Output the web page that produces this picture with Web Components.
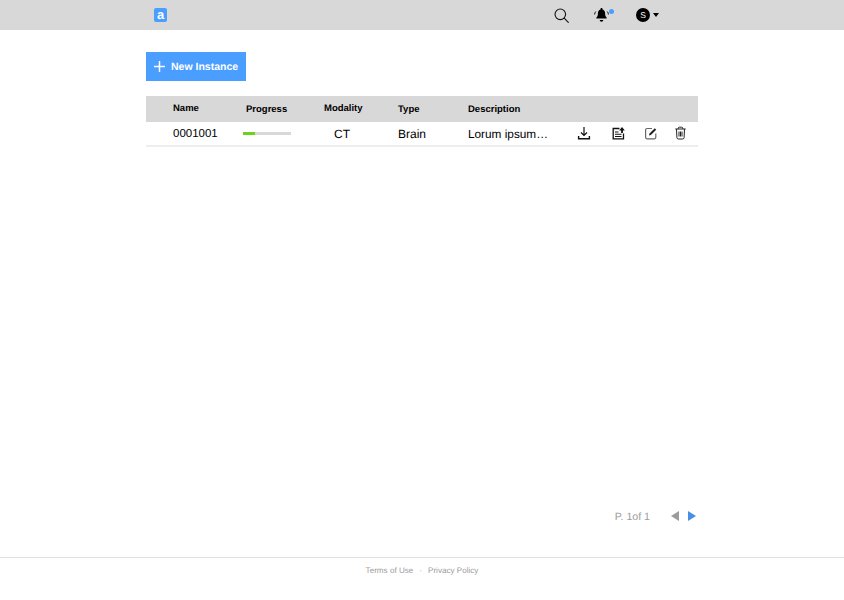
<!DOCTYPE html>
<html>
<head>
<meta charset="utf-8">
<style>
  html, body { margin: 0; padding: 0; background: #fff; }
  body { font-family: "Liberation Sans", Arial, sans-serif; text-rendering: geometricPrecision; }
</style>
</head>
<body>
<app-page>
  <top-bar slot="top"></top-bar>
  <new-button slot="main">New Instance</new-button>
  <instance-table slot="main"></instance-table>
  <page-nav slot="pager"></page-nav>
  <site-footer slot="bottom"></site-footer>
</app-page>
<script>
  class AppPage extends HTMLElement {
    constructor() {
      super();
      this.attachShadow({ mode: 'open' });
      this.shadowRoot.innerHTML = `
        <style>
          :host { display: flex; flex-direction: column; height: 600px; overflow: hidden; }
          main { flex: 1; padding: 22px 146px 0 146px; display: flex; flex-direction: column; }
          .pager { padding: 0 148px 0 0; height: 49px; }
        </style>
        <slot name="top"></slot>
        <main><slot name="main"></slot></main>
        <div class="pager"><slot name="pager"></slot></div>
        <slot name="bottom"></slot>
      `;
    }
  }

  class TopBar extends HTMLElement {
    constructor() {
      super();
      this.attachShadow({ mode: 'open' });
      this.shadowRoot.innerHTML = `
        <style>
          :host { display: flex; align-items: center; height: 30px; background: #d8d8d8; padding-left: 154px; }
          .logo { width: 13px; height: 14px; border-radius: 2px; background: #4a9eff; color: #fff; font: bold 13px/14px "Liberation Sans", sans-serif; text-align: center; }
          .search { margin-left: 387px; display: block; }
          .bell-wrap { position: relative; margin-left: 25px; width: 15px; height: 14px; }
          .bell-wrap svg { display: block; }
          .dot { position: absolute; top: 1px; left: 14.500px; width: 5px; height: 5px; border-radius: 50%; background: #4a9eff; }
          .avatar { margin-left: 28px; width: 14px; height: 14px; border-radius: 50%; background: #000; color: #fff; font: 8.500px/14px "Liberation Sans", sans-serif; text-align: center; position: relative; left: -1px; }
          .caret { margin-left: 2px; width: 0; height: 0; border-left: 3px solid transparent; border-right: 3px solid transparent; border-top: 4px solid #000; }
        </style>
        <div class="logo">a</div>
        <svg class="search" width="15" height="15" viewBox="0 0 15 15" fill="none" stroke="#111" stroke-width="1.100"><circle cx="6.300" cy="6.300" r="5.300"/><path d="M10.200 10.200 14.300 14.300" stroke-linecap="round"/></svg>
        <div class="bell-wrap">
          <svg width="15" height="14" viewBox="0 0 15 14"><path fill="#000" d="M7.500 0c.6 0 1 .4 1 1v.5c1.800.5 2.600 2 2.600 3.900 0 2 .5 3.200 1.500 4.100v1H2.400v-1c1-.9 1.500-2.100 1.500-4.100 0-1.900.8-3.400 2.600-3.900V1c0-.6.400-1 1-1z"/><path fill="#000" d="M5.700 12h3.600a1.800 1.700 0 0 1-3.600 0z"/><path fill="none" stroke="#000" stroke-width=".9" d="M1.800 3.500C1 4.300.7 5.200.6 6.500M13.200 3.500c.8.800 1.100 1.700 1.200 3"/></svg>
          <span class="dot"></span>
        </div>
        <div class="avatar">S</div>
        <div class="caret"></div>
      `;
    }
  }

  class NewButton extends HTMLElement {
    constructor() {
      super();
      this.attachShadow({ mode: 'open' });
      this.shadowRoot.innerHTML = `
        <style>
          :host { display: flex; align-items: center; align-self: flex-start; width: 100px; height: 29px; background: #4a9eff; color: #fff; font: bold 10.500px "Liberation Sans", sans-serif; box-sizing: border-box; padding-left: 8px; }
          svg { margin-right: 6px; display: block; }
        </style>
        <svg width="11" height="11" viewBox="0 0 11 11" stroke="#fff" stroke-width="1.500"><path d="M5.500 0v11M0 5.500h11"/></svg>
        <slot></slot>
      `;
    }
  }

  class InstanceTable extends HTMLElement {
    constructor() {
      super();
      this.attachShadow({ mode: 'open' });
      this.shadowRoot.innerHTML = `
        <style>
          :host { display: block; margin-top: 15px; width: 552px; }
          .head, .row { display: grid; grid-template-columns: 27px 70px 81px 74px 70px 1fr; align-items: center; }
          .head { height: 26px; background: #d8d8d8; font: bold 9.500px "Liberation Sans", sans-serif; color: #000; }
          .head .up { position: relative; top: -1px; }
          .head .prog { padding-left: 3px; }
          .row { height: 23px; border-bottom: 2px solid #eee; font: 12px "Liberation Sans", sans-serif; color: #000; }
          .id { font-size: 11.500px; }
          .ct { padding-left: 10px; }
          .track { width: 48px; height: 3px; background: #d8d8d8; }
          .fill { width: 12px; height: 3px; background: #6fd21a; }
          .last { display: flex; align-items: center; }
          .desc { width: 109px; font-size: 11.800px; }
          .actions { display: flex; align-items: center; position: relative; top: -1px; }
          .actions svg { display: block; }
          .a1 { margin-right: 20px; }
          .a2 { margin-right: 19px; }
          .a3 { margin-right: 16px; }
        </style>
        <div class="head">
          <span></span><span class="up">Name</span><span class="prog">Progress</span><span class="up">Modality</span><span>Type</span><span>Description</span>
        </div>
        <div class="row">
          <span></span><span class="id">0001001</span>
          <div class="track"><div class="fill"></div></div>
          <span class="ct">CT</span><span>Brain</span>
          <div class="last">
            <span class="desc">Lorum ipsum…</span>
            <div class="actions">
              <svg class="a1" width="14" height="14" viewBox="0 0 14 14" fill="none" stroke="#111" stroke-width="1.200"><path d="M7 1v8.500M4 6.500l3 3 3-3"/><path d="M1.600 10v2.700h10.800V10" stroke-width="1.400"/></svg>
              <svg class="a2" width="14" height="14" viewBox="0 0 14 14" fill="none" stroke="#111" stroke-width="1.300"><path d="M8.500 2.500H2.200v10.300h10.300V7.500"/><path d="M4 6h3.500M4 8.300h6.500M4 10.500h6.500" stroke-width="1.100"/><path d="M11 7V3.500" stroke-width="1.800"/><path d="M8.200 4.500 11 1l2.800 3.500z" fill="#111" stroke="none"/></svg>
              <svg class="a3" width="14" height="14" viewBox="0 0 14 14" fill="none" stroke="#666" stroke-width="1.200"><path d="M11.800 7.500v3.800a1.500 1.500 0 0 1-1.500 1.500H3.100a1.500 1.500 0 0 1-1.500-1.500V4A1.500 1.500 0 0 1 3.100 2.500H8"/><path d="M5 9.500 5.500 7.600 10.800 2.300l1.400 1.400L6.900 9z" fill="#222" stroke="none"/></svg>
              <svg width="14" height="14" viewBox="0 0 14 14" fill="none" stroke="#222" stroke-width="1"><path d="M1.300 3h10.400M4.300 3V2.200a1 1 0 0 1 1-1h2.400a1 1 0 0 1 1 1V3M2.500 3l.4 8.500a1.500 1.500 0 0 0 1.500 1.500h4.200a1.500 1.500 0 0 0 1.500-1.500L10.500 3M5 5.500v5M6.500 5.500v5M8 5.500v5"/></svg>
            </div>
          </div>
        </div>
      `;
    }
  }

  class PageNav extends HTMLElement {
    constructor() {
      super();
      this.attachShadow({ mode: 'open' });
      this.shadowRoot.innerHTML = `
        <style>
          :host { display: flex; align-items: center; justify-content: flex-end; height: 16px; font: 10.600px "Liberation Sans", sans-serif; color: #9b9b9b; }
          .label { margin-right: 21px; position: relative; top: 1px; }
          .prev { width: 0; height: 0; border-top: 5px solid transparent; border-bottom: 5px solid transparent; border-right: 8px solid #9b9b9b; margin-right: 9px; }
          .next { width: 0; height: 0; border-top: 5px solid transparent; border-bottom: 5px solid transparent; border-left: 8px solid #4a90e2; }
        </style>
        <span class="label">P. 1of 1</span>
        <span class="prev"></span>
        <span class="next"></span>
      `;
    }
  }

  class SiteFooter extends HTMLElement {
    constructor() {
      super();
      this.attachShadow({ mode: 'open' });
      this.shadowRoot.innerHTML = `
        <style>
          :host { display: flex; justify-content: center; align-items: flex-start; gap: 6px; height: 43px; box-sizing: border-box; border-top: 1px solid #e2e2e2; padding: 7px 0 0; font: 8.100px/12px "Liberation Sans", sans-serif; color: #9b9b9b; }
        </style>
        <span>Terms of Use</span><span>·</span><span>Privacy Policy</span>
      `;
    }
  }

  customElements.define('app-page', AppPage);
  customElements.define('top-bar', TopBar);
  customElements.define('new-button', NewButton);
  customElements.define('instance-table', InstanceTable);
  customElements.define('page-nav', PageNav);
  customElements.define('site-footer', SiteFooter);
</script>
</body>
</html>
